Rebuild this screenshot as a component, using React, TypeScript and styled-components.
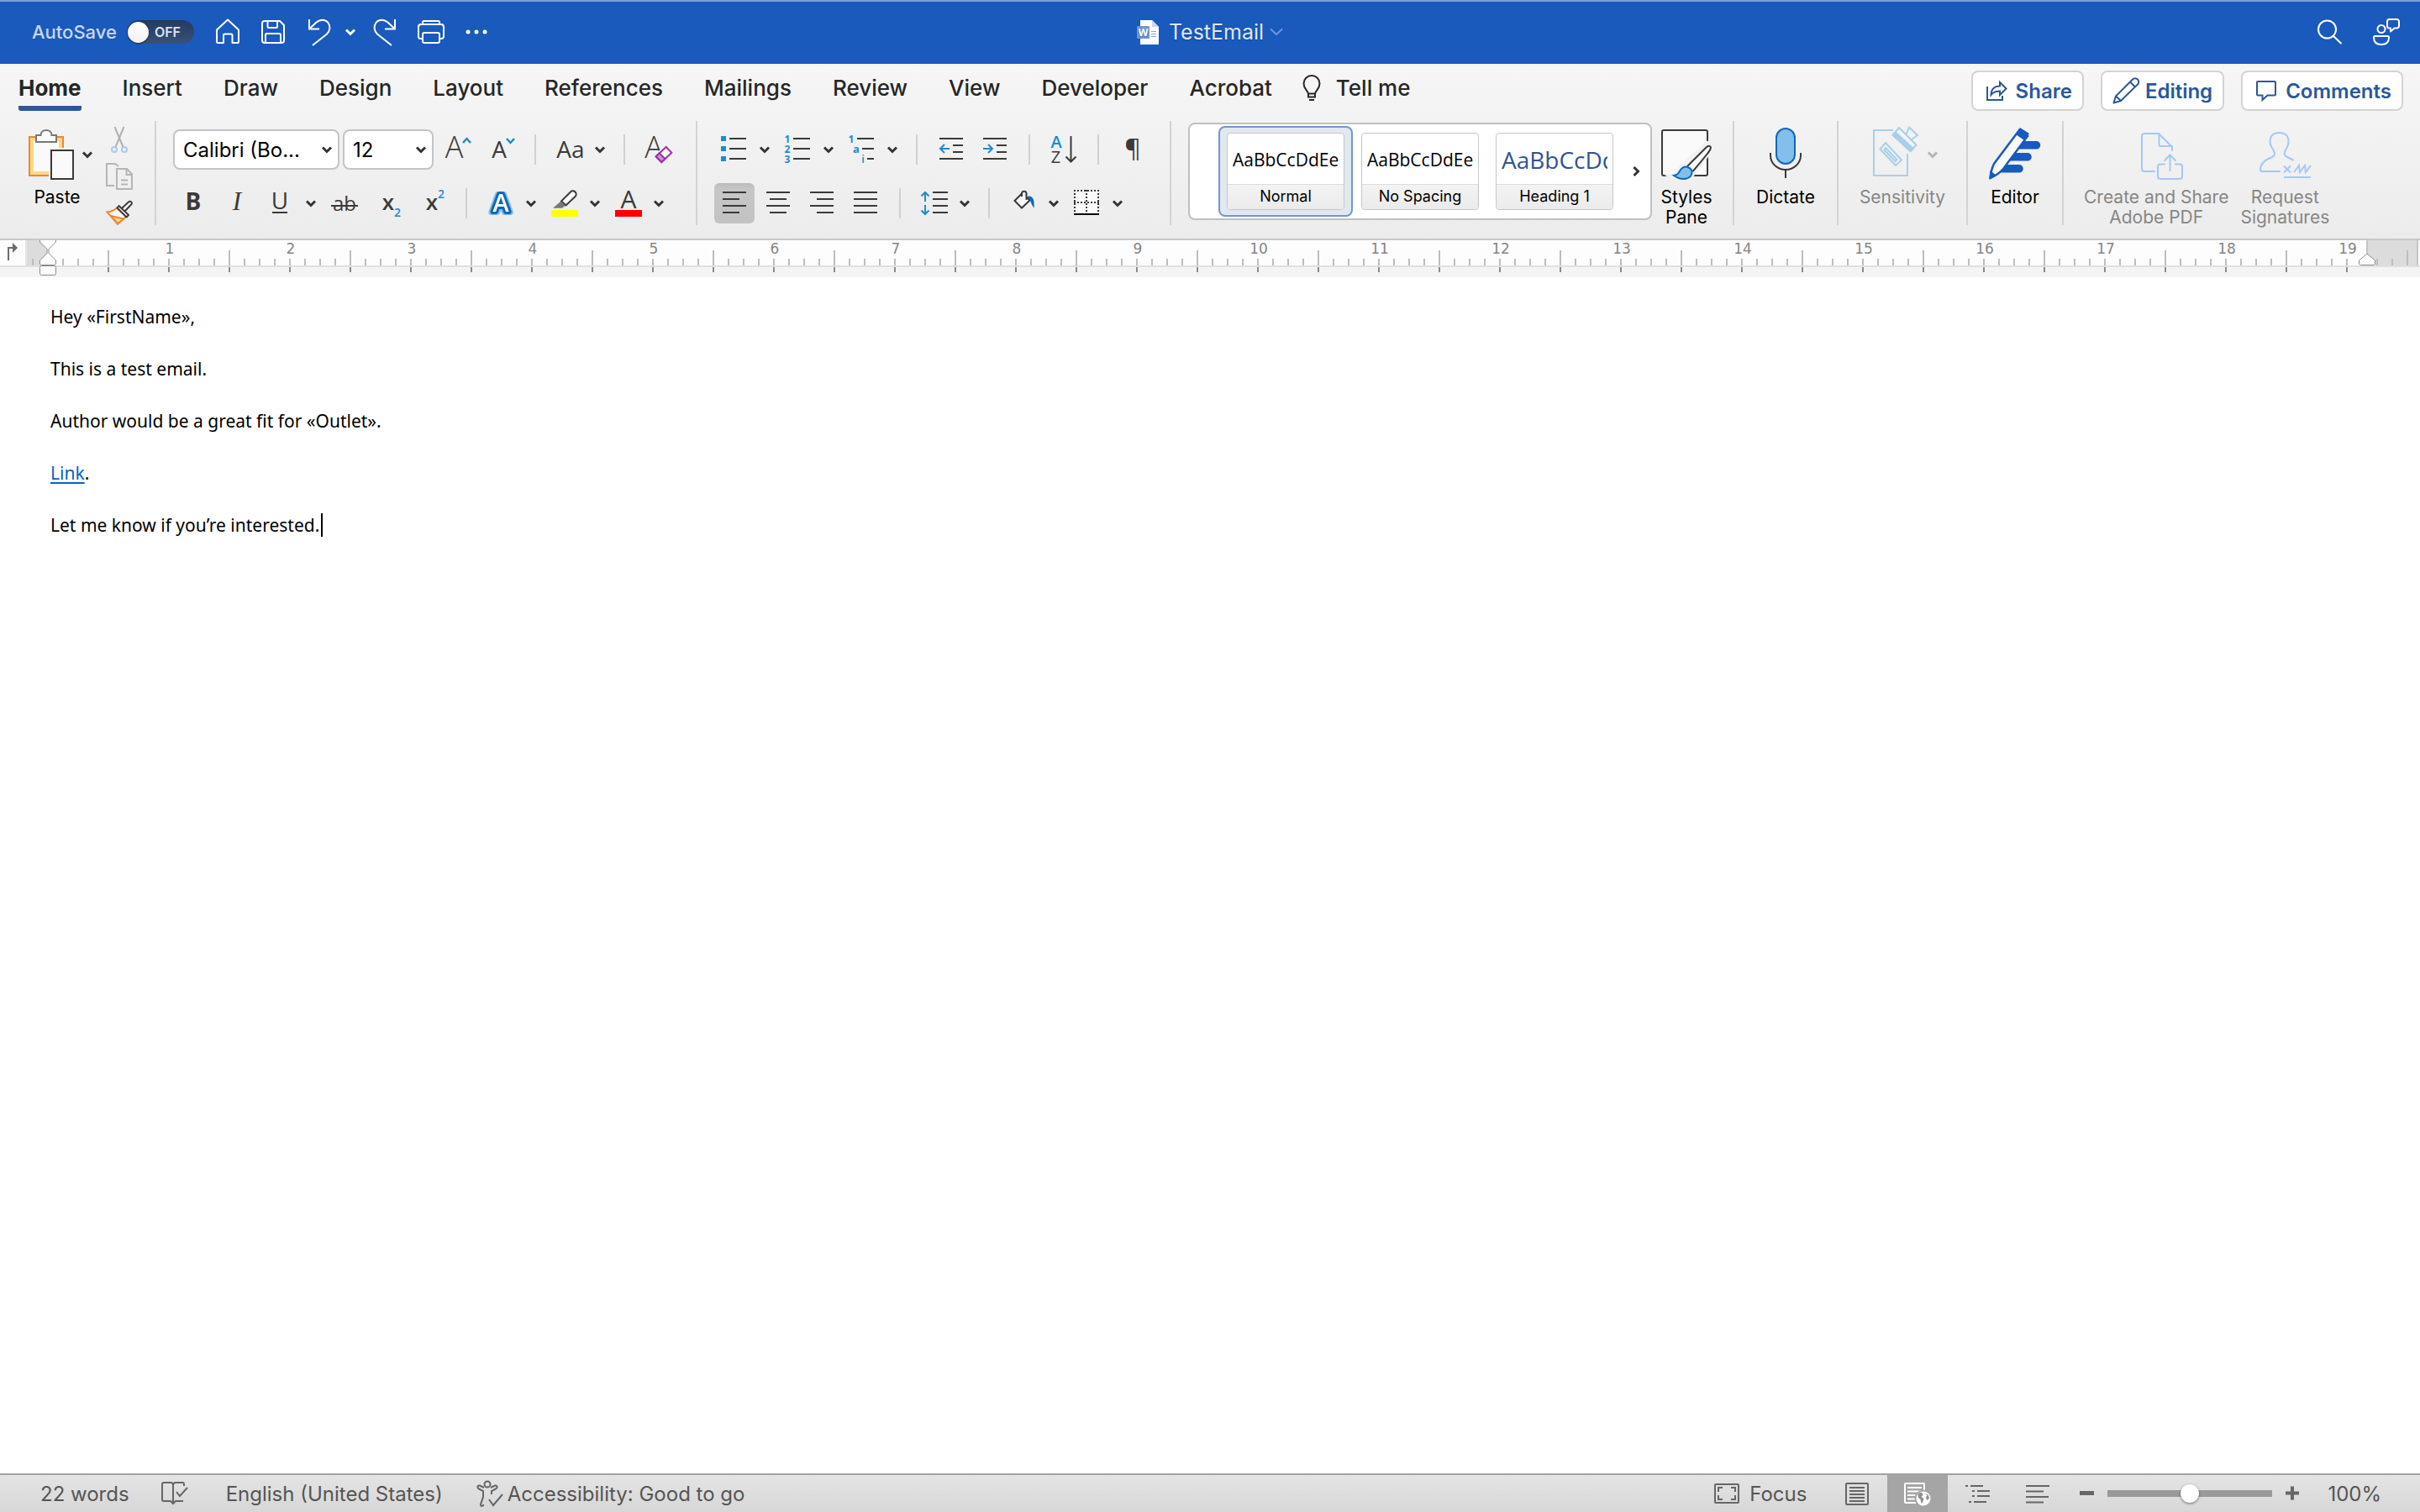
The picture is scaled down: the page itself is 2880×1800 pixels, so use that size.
import React from "react";
import styled, { createGlobalStyle, css } from "styled-components";

const UI = `Inter, "Liberation Sans", sans-serif`;
const DOC = `"Noto Sans", "Open Sans", sans-serif`;
const SAMPLE = `"Open Sans", "Noto Sans", sans-serif`;
const INK = "#3b3a39";
const BLUE = "#1e8bcd";
const DEEP = "#0f68b8";
const WORD = "#2b579a";

const GlobalStyle = createGlobalStyle`
  *, *::before, *::after { box-sizing: border-box; }
  body { margin: 0; background: #fff; font-family: ${UI}; }
  button { margin: 0; padding: 0; border: 0; background: none; color: inherit; font: inherit; }
  svg { display: block; flex: none; overflow: visible; }
`;

const Window = styled.div`
  display: flex;
  flex-direction: column;
  min-height: 100vh;
`;

/* ---------- title bar ---------- */

const TitleBar = styled.header`
  display: grid;
  grid-template-columns: 1fr auto 1fr;
  align-items: center;
  height: 76px;
  background: #1a5abd;
  box-shadow: inset 0 2px 0 #7d9fd8;
  color: #fff;
`;

const QuickAccess = styled.div`
  display: flex;
  align-items: center;
  padding-left: 38px;
`;

const AutoSave = styled.label`
  display: flex;
  align-items: center;
  gap: 12px;
  font-size: 22px;
  font-weight: 500;
  color: #c9d8f2;
`;

const Switch = styled.span`
  display: flex;
  align-items: center;
  gap: 7px;
  width: 80px;
  height: 28px;
  padding: 0 1px;
  border-radius: 14px;
  background: linear-gradient(#243a60, #3a5079);
  font-size: 16px;
  font-weight: 600;
  color: #dbe4f3;
`;

const SwitchKnob = styled.input`
  appearance: none;
  width: 25px;
  height: 25px;
  margin: 0;
  border-radius: 50%;
  background: linear-gradient(#fff, #f1f1f1);
  box-shadow: 0 1px 2px rgba(0, 0, 0, 0.5);
`;

const BarButton = styled.button<{ $lead?: number }>`
  display: flex;
  align-items: center;
  gap: 14px;
  margin-left: ${(p) => p.$lead ?? 0}px;
`;

const TitleButton = styled.button`
  display: flex;
  align-items: center;
  gap: 12px;
  font-size: 25px;
  color: #dfe8f7;
  text-shadow: 0 1px 2px rgba(0, 0, 0, 0.25);
`;

const TitleText = styled.span`
  margin-right: -5px;
`;

const TitleActions = styled.div`
  display: flex;
  justify-content: flex-end;
  gap: 36px;
  padding-right: 24px;
`;

/* ---------- ribbon ---------- */

const RibbonArea = styled.section`
  border-bottom: 2px solid #c8c8c8;
  background: linear-gradient(#f6f6f6, #f3f3f3 30%, #ececec);
`;

const TabBar = styled.div`
  display: flex;
  align-items: flex-start;
  gap: 36px;
  height: 68px;
  padding: 8px 20px 0 22px;
`;

const Tabs = styled.nav`
  display: flex;
  gap: 49px;
`;

const Tab = styled.button<{ $active?: boolean }>`
  display: flex;
  align-items: center;
  gap: 18px;
  height: 48px;
  border-bottom: 6px solid transparent;
  font-size: 26px;
  line-height: 30px;
  font-weight: 500;
  color: #262626;
  ${(p) =>
    p.$active &&
    css`
      font-weight: 700;
      background: linear-gradient(${WORD}, ${WORD}) 0 100% / 100% 6px no-repeat border-box;
      border-radius: 3px;
    `}
`;

const Actions = styled.div`
  display: flex;
  gap: 20px;
  margin-left: auto;
`;

const ActionButton = styled.button`
  display: flex;
  align-items: center;
  gap: 7px;
  height: 48px;
  padding: 0 12px;
  border: 2px solid #d3d3d3;
  border-radius: 8px;
  background: #fff;
  font-size: 24px;
  font-weight: 600;
  color: ${WORD};
`;

const Groups = styled.div`
  display: flex;
  align-items: flex-start;
  height: 140px;
`;

const Group = styled.div<{ $width?: number }>`
  display: flex;
  flex: none;
  justify-content: ${(p) => (p.$width ? "center" : "flex-start")};
  width: ${(p) => (p.$width ? p.$width + "px" : "auto")};
  height: 124px;
  box-sizing: content-box;
  border-right: 2px solid #d3d3d3;
  &:last-child {
    border-right: 0;
  }
`;

const ClipboardGroup = styled(Group)`
  gap: 16px;
  padding: 0 26px;
`;

const ToolGroup = styled(Group)`
  flex-direction: column;
  gap: 16px;
  height: 114px;
  padding: 10px 28px 0 20px;
`;

const StylesGroup = styled(Group)`
  gap: 9px;
  padding: 0 23px 0 20px;
`;

const AcrobatGroup = styled(Group)`
  gap: 14px;
  padding: 0 24px;
`;

const ToolRow = styled.div`
  display: flex;
  align-items: center;
  height: 48px;
`;

const Divider = styled.span<{ $lead?: number }>`
  width: 2px;
  height: 36px;
  margin-left: ${(p) => p.$lead ?? 24}px;
  background: #d0d0d0;
`;

const ToolButton = styled.button<{ $lead?: number; $on?: boolean }>`
  display: flex;
  flex: none;
  align-items: center;
  gap: 14px;
  margin-left: ${(p) => p.$lead ?? 0}px;
  ${(p) =>
    p.$on &&
    css`
      height: 48px;
      padding: 0 8px;
      border-radius: 6px;
      background: linear-gradient(#bcbcbc, #c6c6c6 15%, #c2c2c2);
    `}
`;

const SmallColumn = styled.div`
  display: flex;
  flex-direction: column;
  gap: 12px;
  padding-top: 6px;
`;

const BigButton = styled.button<{ $off?: boolean }>`
  display: flex;
  flex: none;
  flex-direction: column;
  align-items: center;
  align-self: flex-start;
  gap: 7px;
  padding-top: 8px;
  font-size: 21px;
  line-height: 24px;
  text-align: center;
  color: ${(p) => (p.$off ? "#868686" : "#000")};
`;

const BigIcon = styled.span`
  display: flex;
  align-items: center;
  gap: 6px;
`;

const Picker = styled.label<{ $width: number }>`
  display: grid;
  align-items: center;
  width: ${(p) => p.$width}px;
  margin-right: 4px;
  svg {
    grid-area: 1 / 1;
    justify-self: end;
    margin-right: 9px;
    pointer-events: none;
  }
`;

const PickerSelect = styled.select`
  grid-area: 1 / 1;
  appearance: none;
  width: 100%;
  height: 48px;
  padding: 0 10px;
  border: 2px solid #c4c4c4;
  border-radius: 8px;
  background: #fff;
  font: 24px ${UI};
  color: #000;
`;

const Gallery = styled.div`
  display: flex;
  align-items: center;
  width: 552px;
  height: 116px;
  margin-top: 2px;
  padding-left: 34px;
  border: 2px solid #c0c0c0;
  border-radius: 8px;
  background: #fff;
`;

const StyleSlot = styled.button<{ $on?: boolean }>`
  flex: none;
  width: 160px;
  height: 108px;
  padding: 6px 8px;
  border: 2px solid ${(p) => (p.$on ? "#7397c8" : "transparent")};
  border-radius: 8px;
  background: ${(p) => (p.$on ? "#e1e8f2" : "transparent")};
`;

const StyleCard = styled.span`
  display: flex;
  flex-direction: column;
  height: 92px;
  border: 1px solid #c6c6c6;
  border-radius: 4px;
  background: #fff;
  overflow: hidden;
`;

const Sample = styled.span<{ $heading?: boolean }>`
  flex: 1;
  margin: 0 6px;
  overflow: hidden;
  font-family: ${SAMPLE};
  font-size: ${(p) => (p.$heading ? 28 : 21)}px;
  line-height: 62px;
  text-align: left;
  white-space: nowrap;
  color: ${(p) => (p.$heading ? "#2f5496" : "#000")};
`;

const StyleName = styled.span`
  height: 30px;
  border-top: 1px solid #dcdcdc;
  background: linear-gradient(#f3f3f3, #ebebeb);
  font-size: 18px;
  line-height: 28px;
  color: #000;
`;

const GalleryNext = styled.button`
  display: flex;
  flex: 1;
  justify-content: center;
`;

/* ---------- ruler ---------- */

const Ruler = styled.div`
  display: flex;
  height: 44px;
  background: linear-gradient(#fdfdfd 30px, #e0e0e0 30px 32px, #f4f4f4 32px);
`;

const RulerCorner = styled.button`
  flex: none;
  width: 32px;
  height: 30px;
  border-right: 2px solid #e6e6e6;
`;

const Track = styled.div`
  position: relative;
  display: flex;
  flex: 1;
  min-width: 0;
  overflow: hidden;
  background: linear-gradient(
      90deg,
      #dcdcdc 25px,
      transparent 25px calc(100% - 63px),
      #dcdcdc calc(100% - 63px) calc(100% - 4px),
      #c4c4c4 calc(100% - 4px) calc(100% - 2px),
      transparent calc(100% - 2px)
    )
    0 0 / 100% 30px no-repeat;
`;

const TrackLead = styled.div`
  flex: none;
  width: 96px;
  background: linear-gradient(90deg, #bdbdbd 2px, transparent 2px) 6px 22px / 18px 8px repeat-x;
`;

const Unit = styled.div`
  flex: none;
  width: 144px;
  padding-left: 4px;
  font: 17px/20px "DejaVu Sans", sans-serif;
  text-align: center;
  color: #858585;
  background: linear-gradient(#bdbdbd, #bdbdbd) 0 12px / 2px 18px no-repeat,
    linear-gradient(90deg, #bdbdbd 2px, transparent 2px) 0 22px / 18px 8px repeat-x,
    linear-gradient(90deg, #8a8a8a 2px, transparent 2px) 0 32px / 72px 6px repeat-x;
`;

const TrackTail = styled.div`
  flex: none;
  width: 16px;
  background: linear-gradient(#bdbdbd, #bdbdbd) 0 12px / 2px 18px no-repeat;
`;

const IndentMarker = styled.button<{ $right?: boolean }>`
  position: absolute;
  top: 0;
  ${(p) => (p.$right ? "right: 53px;" : "left: 15px;")}
`;

/* ---------- document ---------- */

const Document = styled.main`
  flex: 1;
  padding: 32px 60px;
  background: #fff;
  font-family: ${DOC};
  font-size: 21px;
  line-height: 30px;
  color: #000;
`;

const Paragraph = styled.p`
  margin: 0 0 32px;
`;

const DocLink = styled.a`
  color: #0563c1;
  text-decoration: underline;
  text-decoration-thickness: 2px;
  text-underline-offset: 3px;
`;

const Caret = styled.span`
  display: inline-block;
  width: 2px;
  height: 28px;
  margin-left: 2px;
  vertical-align: -6px;
  background: #000;
`;

/* ---------- status bar ---------- */

const StatusBar = styled.footer`
  display: flex;
  align-items: stretch;
  justify-content: space-between;
  height: 46px;
  padding: 0 46px 0 48px;
  border-top: 2px solid #a3a3a3;
  background: linear-gradient(#e4e4e4, #d7d7d7);
  font-size: 24px;
  color: #555;
`;

const StatusSide = styled.div`
  display: flex;
  align-items: stretch;
`;

const StatusButton = styled.button<{ $lead?: number; $gap?: number }>`
  display: flex;
  align-items: center;
  gap: ${(p) => p.$gap ?? 0}px;
  margin-left: ${(p) => p.$lead ?? 0}px;
`;

const ViewButtons = styled.div`
  display: flex;
  margin-left: 24px;
`;

const ViewButton = styled.button<{ $on?: boolean }>`
  display: flex;
  align-items: center;
  justify-content: center;
  width: 72px;
  background: ${(p) => (p.$on ? "#a5a5a5" : "transparent")};
`;

const ZoomSlider = styled.input`
  appearance: none;
  align-self: center;
  width: 196px;
  height: 22px;
  margin: 0 8px;
  background: linear-gradient(#999, #999) center / 100% 8px no-repeat;
  border-radius: 4px;
  &::-webkit-slider-thumb {
    appearance: none;
    width: 22px;
    height: 22px;
    border-radius: 50%;
    background: #fff;
    box-shadow: 0 1px 3px rgba(0, 0, 0, 0.5);
  }
`;

/* ---------- icons ---------- */

type IconProps = { children: React.ReactNode; w?: number; h?: number; color?: string; sw?: number };

const Icon = ({ children, w = 32, h = 32, color = INK, sw = 2 }: IconProps) => (
  <svg width={w} height={h} viewBox={`0 0 ${w} ${h}`} fill="none" stroke={color} strokeWidth={sw} aria-hidden="true">
    {children}
  </svg>
);

type GlyphProps = {
  x: number;
  y: number;
  size: number;
  children: string;
  weight?: number;
  color?: string;
  family?: string;
  italic?: boolean;
};

const Glyph = ({ x, y, size, children, weight = 400, color = INK, family = "Open Sans", italic }: GlyphProps) => (
  <text
    x={x}
    y={y}
    fontSize={size}
    fontWeight={weight}
    fontFamily={`"${family}", sans-serif`}
    fontStyle={italic ? "italic" : "normal"}
    fill={color}
    stroke="none"
    textAnchor="middle"
  >
    {children}
  </text>
);

const Chevron = ({ color = "#333" }: { color?: string }) => (
  <Icon w={12} h={8} color={color} sw={3}>
    <path d="M1 1.500 6 6.500 11 1.500" />
  </Icon>
);

const HLines = ({ rows }: { rows: [number, number, number][] }) => (
  <path d={rows.map(([y, a, b]) => `M${a} ${y}H${b}`).join("")} />
);

const HomeIcon = () => (
  <Icon color="#fff">
    <path d="M3 13.500 16 1.500 29 13.500V27.500A1.500 1.500 0 0 1 27.500 29H21.500V20A1.500 1.500 0 0 0 20 18.500H12.500A1.500 1.500 0 0 0 11 20V29H4.500A1.500 1.500 0 0 1 3 27.500Z" strokeLinejoin="round" />
  </Icon>
);

const SaveIcon = () => (
  <Icon color="#fff">
    <path d="M6 3H24L29 8V26a3 3 0 0 1-3 3H6a3 3 0 0 1-3-3V6a3 3 0 0 1 3-3Z" />
    <path d="M9.500 3V9.500a1.500 1.500 0 0 0 1.500 1.500H19.500A1.500 1.500 0 0 0 21 9.500V3" />
    <path d="M7 29V19.500A1.500 1.500 0 0 1 8.500 18H23.500A1.500 1.500 0 0 1 25 19.500V29" />
  </Icon>
);

const UNDO = "M3 1V12.500H15M3 12.500 11 5C16 .5 22 .500 25.500 5 28.500 9 28 14.500 24 18.500L7 32";
const UndoIcon = () => (
  <Icon color="#fff">
    <path d={UNDO} />
  </Icon>
);
const RedoIcon = () => (
  <Icon color="#fff">
    <path d={UNDO} transform="translate(32 0) scale(-1 1)" />
  </Icon>
);

const PrintIcon = () => (
  <Icon color="#fff">
    <path d="M6 7V4.500A1.500 1.500 0 0 1 7.500 3H24.500A1.500 1.500 0 0 1 26 4.500V7" />
    <path d="M6 24H3.500A2.500 2.500 0 0 1 1 21.500V10A3 3 0 0 1 4 7H28A3 3 0 0 1 31 10V21.500A2.500 2.500 0 0 1 28.500 24H26" />
    <rect x="6" y="17" width="20" height="12" rx="2" />
  </Icon>
);

const DotsIcon = () => (
  <Icon color="none">
    {[6, 16, 26].map((x) => (
      <circle key={x} cx={x} cy="16" r="2.500" fill="#fff" />
    ))}
  </Icon>
);

const WordFileIcon = () => (
  <Icon w={26} h={30} color="none">
    <path d="M4 1H18L26 9V30H4Z" fill="#fff" />
    <path d="M18 1 26 9H18Z" fill="#c9d9f2" />
    <path d="M17 14.500H23M17 17.500H23M17 20.500H23" stroke="#7fa9de" strokeWidth="1" />
    <rect y="8" width="15" height="15" rx="1" fill="#6d95d6" />
    <Glyph x={7.5} y={20} size={12} weight={700} color="#fff">W</Glyph>
  </Icon>
);

const SearchIcon = () => (
  <Icon color="#fff">
    <circle cx="13.500" cy="13" r="10.500" />
    <path d="M21 21 30.500 30" />
  </Icon>
);

const PersonIcon = () => (
  <Icon color="#fff">
    <circle cx="10" cy="12.500" r="4.500" />
    <path d="M2.500 21H17.500A1.500 1.500 0 0 1 19 22.500C19 28 15.500 31 10 31S1 28 1 22.500A1.500 1.500 0 0 1 2.500 21Z" />
    <path d="M19.500 1H28.500A2.500 2.500 0 0 1 31 3.500V9A2.500 2.500 0 0 1 28.500 11.500H25.500L21 15.500V11.500H19.500A2.500 2.500 0 0 1 17 9V3.500A2.500 2.500 0 0 1 19.500 1Z" strokeLinejoin="round" />
  </Icon>
);

const BulbIcon = () => (
  <Icon w={22} h={32} color="#262626">
    <path d="M7 22.500C6.500 19 1.500 17 1.500 10.500A9.500 9.500 0 0 1 20.500 10.500C20.500 17 15.500 19 15 22.500V26.500H7ZM7 22.500H15M8 30H14" />
  </Icon>
);

const ShareIcon = () => (
  <Icon color={WORD}>
    <path d="M5 11V27H23V22" />
    <path d="M9.500 21C9.500 14.500 13.500 10.500 20 10.500V6L27.500 13.500 20 21V16.500C15 16.500 12 17.500 9.500 21Z" />
  </Icon>
);

const PencilIcon = () => (
  <Icon color={WORD}>
    <path d="M1.500 30.500 4 22.500 24 2.500A4 4 0 0 1 30 8.500L10 28ZM4 22.500 10 28M21 5.500 27 11.500" strokeLinejoin="round" />
  </Icon>
);

const CommentIcon = () => (
  <Icon color={WORD}>
    <path d="M6 5H26A1 1 0 0 1 27 6V20.500A1 1 0 0 1 26 21.500H17.500L11.500 27V21.500H6A1 1 0 0 1 5 20.500V6A1 1 0 0 1 6 5Z" />
  </Icon>
);

const PasteIcon = () => (
  <Icon w={66} h={64}>
    <rect x="9" y="11" width="40" height="46" fill="#f9d98c" stroke="#ef8630" />
    <rect x="14" y="16" width="30" height="36" fill="#fafafa" stroke="none" />
    <path d="M17 17V9H22.500C22.500 5 25.500 3 29 3S35.500 5 35.500 9H41V17Z" fill="#fafafa" stroke="#777" />
    <rect x="32" y="24" width="32" height="40" fill="#f2f2f2" stroke="none" />
    <rect x="35" y="27" width="26" height="34" fill="#fafafa" />
  </Icon>
);

const CutIcon = () => (
  <Icon color="#b0b0b0">
    <path d="M10.500 1 20.500 25M21.500 1 11.500 25" />
    <circle cx="10" cy="28" r="3" stroke="#a3cdea" />
    <circle cx="22" cy="28" r="3" stroke="#a3cdea" />
  </Icon>
);

const CopyIcon = () => (
  <Icon color="#b5b5b5">
    <path d="M10 27H1V1H11L15 4" />
    <path d="M13 7H25L31 13.500V31H13ZM24.500 7V14H31M18 20.500H26M18 25.500H26" />
  </Icon>
);

const BrushIcon = () => (
  <Icon>
    <path d="M1.500 14.500Q8 14 13 9.500L24 20 14 28.500Z" fill="#fff" stroke="#ef8630" />
    <path d="M6 19 21 22.500 14 28.500Z" fill="#f9d98c" stroke="#ef8630" />
    <path d="M15.500 7 27 18 24.500 20.500 13.500 9.500ZM19 10 27.500 2A2.200 2.200 0 0 1 30.500 5L22.500 13.500" fill="#fafafa" strokeLinejoin="round" />
  </Icon>
);

const GrowIcon = () => (
  <Icon>
    <Glyph x={10.5} y={26} size={36} weight={300}>A</Glyph>
    <path d="M21 8 25.500 3 30 8" stroke={BLUE} strokeWidth="2.500" />
  </Icon>
);
const ShrinkIcon = () => (
  <Icon>
    <Glyph x={10} y={26} size={28}>A</Glyph>
    <path d="M19 3 23.500 8 28 3" stroke={BLUE} strokeWidth="2.500" />
  </Icon>
);
const CaseIcon = () => (
  <Icon>
    <Glyph x={17} y={26} size={28}>Aa</Glyph>
  </Icon>
);
const ClearIcon = () => (
  <Icon>
    <Glyph x={10} y={26} size={36} weight={300}>A</Glyph>
    <path d="M24.700 13 31.300 19.700 19.300 31 12.700 24.300Z" fill="#fafafa" stroke="#f1f1f1" strokeWidth="5" />
    <path d="M24.700 13 31.300 19.700 19.300 31 12.700 24.300Z" fill="#fafafa" stroke="#9b30a8" />
    <path d="M16.700 20.500 23.500 27 19.300 31 12.700 24.300Z" fill="#cf92d6" stroke="#9b30a8" />
  </Icon>
);

const BoldIcon = () => (
  <Icon>
    <Glyph x={16} y={24} size={28} weight={700}>B</Glyph>
  </Icon>
);
const ItalicIcon = () => (
  <Icon>
    <Glyph x={16} y={24} size={31} italic family="Liberation Serif">I</Glyph>
  </Icon>
);
const UnderlineIcon = () => (
  <Icon>
    <Glyph x={15} y={23} size={28}>U</Glyph>
    <path d="M6 27H24" />
  </Icon>
);
const StrikeIcon = () => (
  <Icon>
    <Glyph x={16} y={25} size={24}>ab</Glyph>
    <path d="M0 19H32" />
  </Icon>
);
const SubIcon = () => (
  <Icon>
    <Glyph x={12} y={24} size={26} weight={600}>x</Glyph>
    <Glyph x={23} y={32} size={14} weight={600} color={BLUE}>2</Glyph>
  </Icon>
);
const SuperIcon = () => (
  <Icon>
    <Glyph x={12} y={24} size={26} weight={600}>x</Glyph>
    <Glyph x={23} y={10} size={14} weight={600} color={BLUE}>2</Glyph>
  </Icon>
);
const EffectsIcon = () => (
  <Icon>
    <text
      x="16"
      y="26"
      fontSize="29"
      fontWeight="600"
      fontFamily='"Open Sans", sans-serif'
      textAnchor="middle"
      fill="#fff"
      stroke={DEEP}
      strokeWidth="6"
      strokeLinejoin="round"
      paintOrder="stroke"
      filter="drop-shadow(2px 0 0 #83beec) drop-shadow(-2px 0 0 #83beec) drop-shadow(0 1px 0 #83beec)"
    >
      A
    </text>
  </Icon>
);
const HighlightIcon = () => (
  <Icon>
    <path d="M2 21.700 11 14 16.500 19 13 21.700Z" fill="#777" stroke="none" />
    <path d="M12 13.500 23 2.500A3.800 3.800 0 0 1 28.500 8L17.500 18.500Z" fill="#fafafa" />
    <rect y="24" width="32" height="8" fill="#ff0" stroke="none" />
  </Icon>
);
const FontColorIcon = () => (
  <Icon>
    <Glyph x={16} y={22} size={30}>A</Glyph>
    <rect y="24" width="32" height="8" fill="#f00" stroke="none" />
  </Icon>
);

const BulletsIcon = () => (
  <Icon>
    <path d="M0 0H6V6H0ZM0 12H6V18H0ZM0 24H6V30H0Z" fill={BLUE} stroke="none" />
    <HLines rows={[[3, 10, 30], [15, 10, 30], [27, 10, 30]]} />
  </Icon>
);
const NumberingIcon = () => (
  <Icon>
    <Glyph x={3} y={8} size={12} weight={700} color={BLUE}>1</Glyph>
    <Glyph x={3} y={20} size={12} weight={700} color={BLUE}>2</Glyph>
    <Glyph x={3} y={32} size={12} weight={700} color={BLUE}>3</Glyph>
    <HLines rows={[[3, 10, 30], [15, 10, 30], [27, 10, 30]]} />
  </Icon>
);
const MultilevelIcon = () => (
  <Icon>
    <Glyph x={3} y={8} size={12} weight={700} color={BLUE}>1</Glyph>
    <Glyph x={9} y={20} size={13} weight={700} color={BLUE}>a</Glyph>
    <Glyph x={17} y={32} size={13} weight={600} color={BLUE}>i</Glyph>
    <HLines rows={[[3, 10, 30], [15, 16, 30], [27, 22, 30]]} />
  </Icon>
);
const OutdentIcon = () => (
  <Icon>
    <HLines rows={[[3, 2, 30], [11, 18, 30], [19, 18, 30], [27, 2, 30]]} />
    <path d="M14 15H3.500M8 10 3 15 8 20" stroke={BLUE} />
  </Icon>
);
const IndentIcon = () => (
  <Icon>
    <HLines rows={[[3, 2, 30], [11, 18, 30], [19, 18, 30], [27, 2, 30]]} />
    <path d="M2 15H12.500M8 10 13 15 8 20" stroke={BLUE} />
  </Icon>
);
const SortIcon = () => (
  <Icon>
    <Glyph x={7} y={14} size={20} weight={600} color={BLUE}>A</Glyph>
    <Glyph x={6.5} y={32} size={20}>Z</Glyph>
    <path d="M24.500 0V30.500M18.500 24.500 24.500 30.500 30.500 24.500" />
  </Icon>
);
const PilcrowIcon = () => (
  <Icon>
    <Glyph x={16} y={25} size={30}>¶</Glyph>
  </Icon>
);
const AlignIcon = ({ a, b }: { a: number; b: number }) => (
  <Icon>
    <HLines rows={[[3, 2, 30], [11, a, b], [19, 2, 30], [27, a, b]]} />
  </Icon>
);
const SpacingIcon = () => (
  <Icon>
    <HLines rows={[[3, 14, 32], [11, 14, 32], [19, 14, 32], [27, 14, 32]]} />
    <path d="M5 14V3M.500 7.500 5 3 9.500 7.500M5 18V29M.500 24.500 5 29 9.500 24.500" stroke={BLUE} />
  </Icon>
);
const ShadingIcon = () => (
  <Icon>
    <path d="M14 4.500 5.500 13 14 21.500 23.500 12.500 20 9" fill="#fafafa" />
    <path d="M20.500 8C27 6 29.500 12 28.500 21.500 25.500 18 25 14 23.500 12Z" fill={DEEP} stroke="none" />
    <path d="M14 8V4A2.800 2.800 0 0 1 19.500 4V12" />
  </Icon>
);
const BordersIcon = () => (
  <Icon>
    <rect x="0" y="0" width="30" height="30" fill="#fafafa" stroke="none" />
    <path d="M0 1H30M0 15H30M1 0V28M15 0V28M29 0V28" strokeDasharray="2 2" />
    <path d="M0 29H30" stroke="#000" />
  </Icon>
);

const StylesPaneIcon = () => (
  <Icon w={64} h={64}>
    <rect x="3" y="3" width="54" height="54" rx="2" fill="#fafafa" />
    <path d="M15 58C24 57 23 51 28 46L57 20 62 24 40 52C38 60 24 64 15 58Z" fill="#f1f1f1" stroke="#f1f1f1" strokeWidth="7" />
    <path d="M33 46 55 24C58.500 20.500 62 21.500 60.500 25.500 59 29 49 41 39.500 52" fill="#fafafa" />
    <path d="M17 57C24 56 23 51 26.500 48.500 31 44.500 38.500 47.500 38.500 53.500 38 61 27 64 17 57Z" fill="#83beec" stroke={DEEP} />
  </Icon>
);
const DictateIcon = () => (
  <Icon w={64} h={64}>
    <rect x="21" y="1" width="22" height="42" rx="11" fill="#83beec" stroke={DEEP} />
    <path d="M14 30V33A18 17 0 0 0 50 33V30M32 50V60" />
  </Icon>
);
const SensitivityIcon = () => (
  <Icon w={66} h={64} color="#a9cfe9">
    <path d="M31 3H8V57H48V31" />
    <path d="M22 18 41 38.500 34 45 15.500 25.500Z" />
    <path d="M22 24 35.500 38 33.500 40 20.500 26.500Z" />
    <path d="M38 0 58.500 20.500 51.500 28 30.500 9Z" fill="#f4f4f4" />
    <path d="M31 8 34 5.500 55 25 51.500 28Z" fill="#a9cfe9" />
    <path d="M46.500 8 50 -.500 60 9 53 14" />
  </Icon>
);
const EditorIcon = () => (
  <Icon w={64} h={64} color="none">
    <path d="M36 16H57.500A4.800 4.800 0 0 1 57.500 25.600H30ZM26 30H47A4.800 4.800 0 0 1 47 39.600H20ZM18 44H37A4.800 4.800 0 0 1 37 53.600H10Z" fill="#185abd" />
    <path d="M37 3 47 10 18 49Q13 55 3 60 3 51 7 43Z" fill="#fafafa" stroke="#185abd" strokeWidth="2.500" />
    <path d="M38 0 49 7 43 15 33 8ZM1 61 2.500 51 10 57Z" fill="#185abd" />
  </Icon>
);
const PdfIcon = () => (
  <Icon w={64} h={64} color="#a6c7f1">
    <path d="M30 52H18A3 3 0 0 1 15 49V10A3 3 0 0 1 18 7H35L51 23V27M35.500 7V20A2 2 0 0 0 37.500 22H51" strokeLinecap="round" />
    <path d="M42 43.500H37A3 3 0 0 0 34 46.500V58A3 3 0 0 0 37 61H60A3 3 0 0 0 63 58V46.500A3 3 0 0 0 60 43.500H55M48.500 51V33M42 39 48.500 32.500 55 39" strokeLinecap="round" />
  </Icon>
);
const SignatureIcon = () => (
  <Icon w={64} h={64} color="#a6c7f1">
    <path d="M26 52H5A2 2 0 0 1 3 50C3 42 9 38 17 35 21 33 20.500 30 18.500 26.500 12 18 13 6 25.500 6S39 18 33 26.500C31 30 31 33 35 35L42 38.500" strokeLinecap="round" />
    <path d="M31 45.500 39 53.500M39 45.500 31 53.500M43 53 49 45 50 53 56 45 57 53 63 45M31 59H63" />
  </Icon>
);

const TabStopIcon = () => (
  <Icon w={30} h={30} color="#6b6b6b">
    <path d="M10 24V9H16" />
    <path d="M15 3 21 9 15 15Z" fill="#6b6b6b" stroke="none" />
  </Icon>
);
const LeftMarker = () => (
  <Icon w={20} h={42} color="#8a8a8a" sw={1}>
    <path d="M.500 0V2L9 10.500V15.500L.500 24V27A2 2 0 0 0 2.500 29.500H17.500A2 2 0 0 0 19.500 27V24L11 15.500V10.500L19.500 2V0" fill="#fff" />
    <rect x=".500" y="30.500" width="19" height="11" rx="2" fill="#fff" />
  </Icon>
);
const RightMarker = () => (
  <Icon w={20} h={42} color="#8a8a8a" sw={1}>
    <path d="M10 0V16" stroke="#c4c4c4" strokeWidth="2" />
    <path d="M10 16 .500 24V27A2 2 0 0 0 2.500 29.500H17.500A2 2 0 0 0 19.500 27V24Z" fill="#fff" />
  </Icon>
);

const GREY = "#666";
const ProofIcon = () => (
  <Icon color={GREY}>
    <path d="M27 7V5A2 2 0 0 0 25 3H17C15 3 14 4 14 6V28M14 6C14 4 13 3 11 3H3A2 2 0 0 0 1 5V23A2 2 0 0 0 3 25H11L14 28 17 25H26M18 14 22 19 31 9" />
  </Icon>
);
const AccessibilityIcon = () => (
  <Icon color={GREY}>
    <circle cx="13" cy="5" r="3.500" />
    <path d="M9 9 4 6.500C1 6 .500 9 3 10.500L8 13V20L5 29C5 31.500 8 31.500 8.500 29M17 9 22 6.500C25 6 25.500 9 23 10.500L18 13V17M15 23 20 30 31 17" />
  </Icon>
);
const FocusIcon = () => (
  <Icon color={GREY}>
    <rect x="3" y="5" width="28" height="22" rx="1" />
    <path d="M7 14V9H12M22 9H27V14M27 18V23H22M12 23H7V18" />
  </Icon>
);
const PrintViewIcon = () => (
  <Icon color={GREY}>
    <rect x="3" y="4" width="26" height="25" rx="1" />
    <path d="M7 9H25M7 13H25M7 17H25M7 21H25M7 25H25" />
  </Icon>
);
const WebViewIcon = () => (
  <Icon color="#fff">
    <rect x="1" y="4" width="23" height="23" rx="1" />
    <path d="M4 9H21M4 13.500H21M4 18H16M4 22.500H14" />
    <circle cx="23" cy="22" r="9.500" fill="#fff" stroke="#a5a5a5" />
    <path d="M16.500 17C18 15 20 14.500 21 15L22.500 17.500 20.500 20 23.500 22 22.500 25.500 20.500 28 19.500 23 17 21ZM25.500 15.500 29 18 30 22 27 24 26 20.500 27.500 18.500Z" fill="#8f8f8f" stroke="none" />
  </Icon>
);
const OutlineViewIcon = () => (
  <Icon color={GREY}>
    <path d="M1 7H4M7 7H22M9 13H12M15 13H30M9 19H12M15 19H30M5 26H8M11 26H26" />
  </Icon>
);
const DraftViewIcon = () => (
  <Icon color={GREY}>
    <path d="M1 7H29M1 13.500H22M1 20H28M1 26.500H22" />
  </Icon>
);

/* ---------- content ---------- */

const TABS = ["Home", "Insert", "Draw", "Design", "Layout", "References", "Mailings", "Review", "View", "Developer", "Acrobat"];
const UNITS = Array.from({ length: 19 }, (_, i) => i + 1);
const STYLES = [
  { name: "Normal", on: true },
  { name: "No Spacing" },
  { name: "Heading 1", heading: true },
];

type ToolProps = { label: string; icon: React.ReactNode; lead?: number; menu?: boolean; on?: boolean };
const Tool = ({ label, icon, lead, menu, on }: ToolProps) => (
  <ToolButton aria-label={label} aria-pressed={on} $lead={lead} $on={on}>
    {icon}
    {menu && <Chevron />}
  </ToolButton>
);

export default function App() {
  return (
    <Window>
      <GlobalStyle />
      <TitleBar>
        <QuickAccess>
          <AutoSave>
            AutoSave
            <Switch>
              <SwitchKnob type="checkbox" role="switch" />
              OFF
            </Switch>
          </AutoSave>
          <BarButton aria-label="Home" $lead={24}><HomeIcon /></BarButton>
          <BarButton aria-label="Save" $lead={22}><SaveIcon /></BarButton>
          <BarButton aria-label="Undo" $lead={24}><UndoIcon /><Chevron color="#fff" /></BarButton>
          <BarButton aria-label="Redo" $lead={18}><RedoIcon /></BarButton>
          <BarButton aria-label="Print" $lead={24}><PrintIcon /></BarButton>
          <BarButton aria-label="More" $lead={22}><DotsIcon /></BarButton>
        </QuickAccess>
        <TitleButton>
          <WordFileIcon />
          <TitleText>TestEmail</TitleText>
          <Icon w={16} h={10} color="#6f97d9"><path d="M1 1.500 8 8 15 1.500" /></Icon>
        </TitleButton>
        <TitleActions>
          <BarButton aria-label="Search"><SearchIcon /></BarButton>
          <BarButton aria-label="Account"><PersonIcon /></BarButton>
        </TitleActions>
      </TitleBar>

      <RibbonArea>
        <TabBar>
          <Tabs>
            {TABS.map((t) => (
              <Tab key={t} $active={t === "Home"}>{t}</Tab>
            ))}
          </Tabs>
          <Tab><BulbIcon />Tell me</Tab>
          <Actions>
            <ActionButton><ShareIcon />Share</ActionButton>
            <ActionButton><PencilIcon />Editing</ActionButton>
            <ActionButton><CommentIcon />Comments</ActionButton>
          </Actions>
        </TabBar>

        <Groups>
          <ClipboardGroup>
            <BigButton>
              <BigIcon><PasteIcon /><Chevron /></BigIcon>
              Paste
            </BigButton>
            <SmallColumn>
              <Tool label="Cut" icon={<CutIcon />} />
              <Tool label="Copy" icon={<CopyIcon />} />
              <Tool label="Format painter" icon={<BrushIcon />} />
            </SmallColumn>
          </ClipboardGroup>

          <ToolGroup>
            <ToolRow>
              <Picker $width={198}>
                <PickerSelect aria-label="Font"><option>Calibri (Bo...</option></PickerSelect>
                <Chevron />
              </Picker>
              <Picker $width={108}>
                <PickerSelect aria-label="Font size"><option>12</option></PickerSelect>
                <Chevron />
              </Picker>
              <Tool label="Grow font" icon={<GrowIcon />} lead={10} />
              <Tool label="Shrink font" icon={<ShrinkIcon />} lead={22} />
              <Divider $lead={20} />
              <Tool label="Change case" icon={<CaseIcon />} lead={24} menu />
              <Divider $lead={22} />
              <Tool label="Clear formatting" icon={<ClearIcon />} lead={24} />
            </ToolRow>
            <ToolRow>
              <Tool label="Bold" icon={<BoldIcon />} lead={8} />
              <Tool label="Italic" icon={<ItalicIcon />} lead={20} />
              <Tool label="Underline" icon={<UnderlineIcon />} lead={20} menu />
              <Tool label="Strikethrough" icon={<StrikeIcon />} lead={18} />
              <Tool label="Subscript" icon={<SubIcon />} lead={24} />
              <Tool label="Superscript" icon={<SuperIcon />} lead={20} />
              <Divider $lead={20} />
              <Tool label="Text effects" icon={<EffectsIcon />} lead={24} menu />
              <Tool label="Highlight" icon={<HighlightIcon />} lead={18} menu />
              <Tool label="Font color" icon={<FontColorIcon />} lead={18} menu />
            </ToolRow>
          </ToolGroup>

          <ToolGroup>
            <ToolRow>
              <Tool label="Bullets" icon={<BulletsIcon />} lead={8} menu />
              <Tool label="Numbering" icon={<NumberingIcon />} lead={18} menu />
              <Tool label="Multilevel list" icon={<MultilevelIcon />} lead={18} menu />
              <Divider $lead={22} />
              <Tool label="Decrease indent" icon={<OutdentIcon />} lead={24} />
              <Tool label="Increase indent" icon={<IndentIcon />} lead={20} />
              <Divider />
              <Tool label="Sort" icon={<SortIcon />} lead={24} />
              <Divider />
              <Tool label="Show marks" icon={<PilcrowIcon />} lead={24} />
            </ToolRow>
            <ToolRow>
              <Tool label="Align left" icon={<AlignIcon a={2} b={22} />} on />
              <Tool label="Center" icon={<AlignIcon a={6} b={26} />} lead={12} />
              <Tool label="Align right" icon={<AlignIcon a={10} b={30} />} lead={20} />
              <Tool label="Justify" icon={<AlignIcon a={2} b={30} />} lead={20} />
              <Divider />
              <Tool label="Line spacing" icon={<SpacingIcon />} lead={24} menu />
              <Divider $lead={22} />
              <Tool label="Shading" icon={<ShadingIcon />} lead={24} menu />
              <Tool label="Borders" icon={<BordersIcon />} lead={18} menu />
            </ToolRow>
          </ToolGroup>

          <StylesGroup>
            <Gallery>
              {STYLES.map((s) => (
                <StyleSlot key={s.name} $on={s.on}>
                  <StyleCard>
                    <Sample $heading={s.heading}>{s.heading ? "AaBbCcDd" : "AaBbCcDdEe"}</Sample>
                    <StyleName>{s.name}</StyleName>
                  </StyleCard>
                </StyleSlot>
              ))}
              <GalleryNext aria-label="More styles">
                <Icon w={8} h={12} color="#333" sw={3}><path d="M1.500 1 6.500 6 1.500 11" /></Icon>
              </GalleryNext>
            </Gallery>
            <BigButton>
              <StylesPaneIcon />
              <span>Styles<br />Pane</span>
            </BigButton>
          </StylesGroup>

          <Group $width={122}>
            <BigButton><DictateIcon />Dictate</BigButton>
          </Group>
          <Group $width={152}>
            <BigButton $off>
              <BigIcon><SensitivityIcon /><Chevron color="#b3b3b3" /></BigIcon>
              Sensitivity
            </BigButton>
          </Group>
          <Group $width={112}>
            <BigButton><EditorIcon />Editor</BigButton>
          </Group>
          <AcrobatGroup>
            <BigButton $off>
              <PdfIcon />
              <span>Create and Share<br />Adobe PDF</span>
            </BigButton>
            <BigButton $off>
              <SignatureIcon />
              <span>Request<br />Signatures</span>
            </BigButton>
          </AcrobatGroup>
        </Groups>
      </RibbonArea>

      <Ruler>
        <RulerCorner aria-label="Tab stop"><TabStopIcon /></RulerCorner>
        <Track>
          <TrackLead />
          {UNITS.map((n) => (
            <Unit key={n}>{n}</Unit>
          ))}
          <TrackTail />
          <IndentMarker aria-label="Left indent"><LeftMarker /></IndentMarker>
          <IndentMarker aria-label="Right indent" $right><RightMarker /></IndentMarker>
        </Track>
      </Ruler>

      <Document>
        <Paragraph>Hey «FirstName»,</Paragraph>
        <Paragraph>This is a test email.</Paragraph>
        <Paragraph>Author would be a great fit for «Outlet».</Paragraph>
        <Paragraph><DocLink href="#link">Link</DocLink>.</Paragraph>
        <Paragraph>Let me know if you’re interested.<Caret /></Paragraph>
      </Document>

      <StatusBar>
        <StatusSide>
          <StatusButton>22 words</StatusButton>
          <StatusButton aria-label="Proofing" $lead={38}><ProofIcon /></StatusButton>
          <StatusButton $lead={45}>English (United States)</StatusButton>
          <StatusButton $lead={40} $gap={5}><AccessibilityIcon />Accessibility: Good to go</StatusButton>
        </StatusSide>
        <StatusSide>
          <StatusButton $gap={12}><FocusIcon />Focus</StatusButton>
          <ViewButtons>
            <ViewButton aria-label="Print layout"><PrintViewIcon /></ViewButton>
            <ViewButton aria-label="Web layout" $on><WebViewIcon /></ViewButton>
            <ViewButton aria-label="Outline"><OutlineViewIcon /></ViewButton>
            <ViewButton aria-label="Draft"><DraftViewIcon /></ViewButton>
          </ViewButtons>
          <StatusButton aria-label="Zoom out" $lead={6}>
            <Icon color={GREY} sw={5}><path d="M7 15.500H24" /></Icon>
          </StatusButton>
          <ZoomSlider type="range" aria-label="Zoom" min={0} max={200} defaultValue={100} />
          <StatusButton aria-label="Zoom in">
            <Icon color={GREY} sw={4}><path d="M8 15.500H24M16 7.500V23.500" /></Icon>
          </StatusButton>
          <StatusButton $lead={26}>100%</StatusButton>
        </StatusSide>
      </StatusBar>
    </Window>
  );
}
